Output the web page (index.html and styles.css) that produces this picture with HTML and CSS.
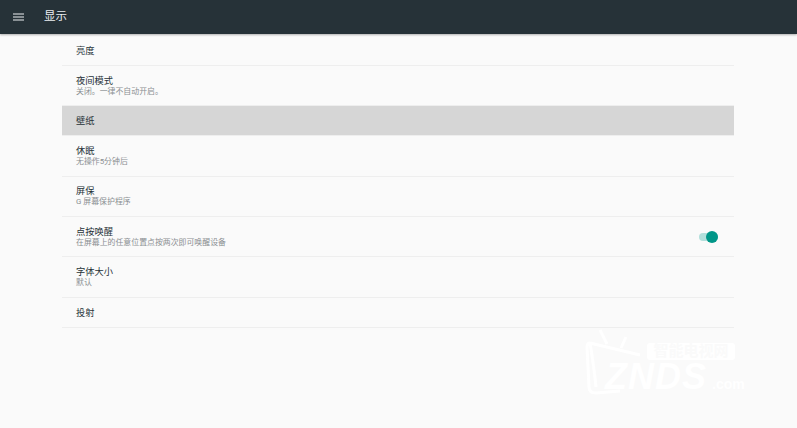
FILE: index.html
```html
<!DOCTYPE html>
<html lang="zh-CN">
<head>
    <meta charset="UTF-8">
    <meta name="viewport" content="width=device-width, initial-scale=1.0">
    <title>显示</title>
    <link rel="stylesheet" href="styles.css">
</head>
<body>
    <!-- Top bar -->
    <header class="topbar">
        <svg class="menu-icon" width="11" height="8" viewBox="0 0 11 8">
            <path d="M0 1h11M0 4h11M0 7h11" stroke="#eceff1" stroke-width="1" fill="none"/>
        </svg>
        <span class="topbar-title">显示</span>
    </header>

    <!-- Settings list -->
    <main class="list">
        <div class="row"><div class="row-title">亮度</div></div>
        <div class="row row-double">
            <div class="row-title">夜间模式</div>
            <div class="row-sub">关闭。一律不自动开启。</div>
        </div>
        <div class="row row-active"><div class="row-title">壁纸</div></div>
        <div class="row row-double">
            <div class="row-title">休眠</div>
            <div class="row-sub">无操作5分钟后</div>
        </div>
        <div class="row row-double">
            <div class="row-title">屏保</div>
            <div class="row-sub">G 屏幕保护程序</div>
        </div>
        <div class="row row-double row-switch">
            <div>
                <div class="row-title">点按唤醒</div>
                <div class="row-sub">在屏幕上的任意位置点按两次即可唤醒设备</div>
            </div>
            <div class="switch"><span class="switch-thumb"></span></div>
        </div>
        <div class="row row-double">
            <div class="row-title">字体大小</div>
            <div class="row-sub">默认</div>
        </div>
        <div class="row"><div class="row-title">投射</div></div>
    </main>

    <!-- Watermark -->
    <div class="watermark">
        <svg class="watermark-tv" width="60" height="68" viewBox="0 0 60 68">
            <path d="M15 2l7 14M41 9l-5 11M5 15l50 12M5 15q-3 0-3 4l2 40q0 6 7 6l24-2M5 15q4 24 6 44" stroke="#ffffff" stroke-width="3" fill="none"/>
        </svg>
        <span class="watermark-cn">智能电视网</span>
        <span class="watermark-en">ZNDS</span>
        <span class="watermark-com">.com</span>
    </div>
</body>
</html>
```

FILE: styles.css
```css
body { margin: 0; height: 428px; overflow: hidden; position: relative; background: #fafafa; font-family: "Roboto", "Noto Sans CJK SC", sans-serif; }

.topbar { height: 34px; display: flex; align-items: center; background: #263238; box-shadow: 0 1px 2px rgba(0, 0, 0, 0.3); padding: 0 0 1px 13px; box-sizing: border-box; }
.menu-icon { margin-right: 20px; }
.topbar-title { font-size: 11.500px; line-height: 14px; margin-top: -2px; color: #eceff1; }

.list { margin: 1px 63px 0 62px; }
.row { box-sizing: border-box; height: 30px; display: flex; flex-direction: column; justify-content: center; padding: 0 14px; border-bottom: 1px solid #eeeeee; }
.row:first-child { height: 31px; }
.row-double { height: 40.330px; }
.row-active { background: #d6d6d6; }
.row-switch { flex-direction: row; align-items: center; justify-content: space-between; }
.row-title { font-size: 9.250px; line-height: 11px; color: #263238; }
.row-sub { font-size: 7.900px; line-height: 10px; margin-top: 1px; color: #8a8f92; }

.switch { width: 19px; height: 8px; border-radius: 4px; background: #b2dfdb; position: relative; margin-right: 2px; }
.switch-thumb { position: absolute; right: 0; top: -2px; width: 12px; height: 12px; border-radius: 50%; background: #009688; }

.watermark { position: absolute; left: 585px; top: 328px; width: 180px; height: 80px; color: #ffffff; }
.watermark-tv { position: absolute; left: 0; top: 0; }
.watermark-cn { position: absolute; left: 62px; top: 15px; width: 88px; height: 17px; line-height: 17px; background: #ffffff; color: #fafafa; border-radius: 3px; font-size: 15px; text-align: center; font-weight: 700; }
.watermark-en { position: absolute; left: 20px; top: 35px; font-size: 36px; line-height: 28px; letter-spacing: 1px; font-weight: 700; font-style: italic; font-family: "Liberation Sans", sans-serif; }
.watermark-com { position: absolute; left: 127px; top: 48px; font-size: 14px; line-height: 16px; font-weight: 700; font-family: "Liberation Sans", sans-serif; }
```
